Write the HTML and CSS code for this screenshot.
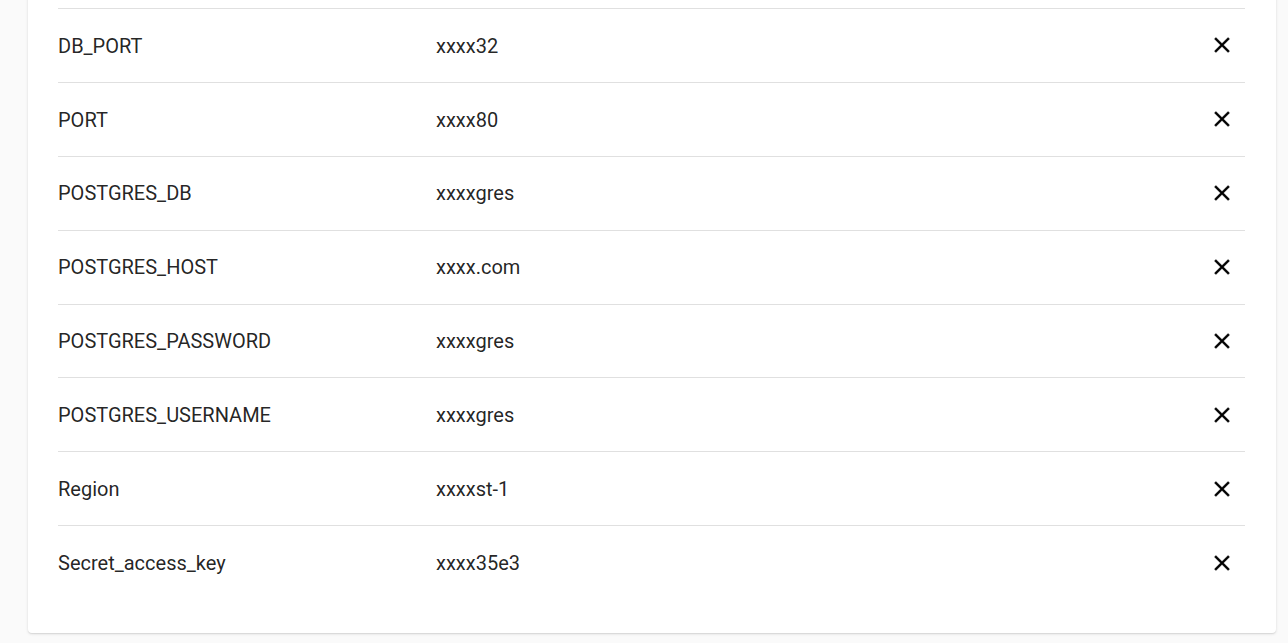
FILE: index.html
```html
<!DOCTYPE html>
<html>
<head>
<meta charset="utf-8">
<link rel="stylesheet" href="styles.css">
</head>
<body>
<div class="card">
  <div class="row"><div class="key">DB_PORT</div><div class="val">xxxx32</div><button class="del" aria-label="delete"><svg viewBox="0 0 24 24"><path d="M19 6.41L17.59 5 12 10.59 6.41 5 5 6.41 10.59 12 5 17.59 6.41 19 12 13.41 17.59 19 19 17.59 13.41 12z"/></svg></button></div>
  <div class="row"><div class="key">PORT</div><div class="val">xxxx80</div><button class="del" aria-label="delete"><svg viewBox="0 0 24 24"><path d="M19 6.41L17.59 5 12 10.59 6.41 5 5 6.41 10.59 12 5 17.59 6.41 19 12 13.41 17.59 19 19 17.59 13.41 12z"/></svg></button></div>
  <div class="row"><div class="key">POSTGRES_DB</div><div class="val">xxxxgres</div><button class="del" aria-label="delete"><svg viewBox="0 0 24 24"><path d="M19 6.41L17.59 5 12 10.59 6.41 5 5 6.41 10.59 12 5 17.59 6.41 19 12 13.41 17.59 19 19 17.59 13.41 12z"/></svg></button></div>
  <div class="row"><div class="key">POSTGRES_HOST</div><div class="val">xxxx.com</div><button class="del" aria-label="delete"><svg viewBox="0 0 24 24"><path d="M19 6.41L17.59 5 12 10.59 6.41 5 5 6.41 10.59 12 5 17.59 6.41 19 12 13.41 17.59 19 19 17.59 13.41 12z"/></svg></button></div>
  <div class="row"><div class="key">POSTGRES_PASSWORD</div><div class="val">xxxxgres</div><button class="del" aria-label="delete"><svg viewBox="0 0 24 24"><path d="M19 6.41L17.59 5 12 10.59 6.41 5 5 6.41 10.59 12 5 17.59 6.41 19 12 13.41 17.59 19 19 17.59 13.41 12z"/></svg></button></div>
  <div class="row"><div class="key">POSTGRES_USERNAME</div><div class="val">xxxxgres</div><button class="del" aria-label="delete"><svg viewBox="0 0 24 24"><path d="M19 6.41L17.59 5 12 10.59 6.41 5 5 6.41 10.59 12 5 17.59 6.41 19 12 13.41 17.59 19 19 17.59 13.41 12z"/></svg></button></div>
  <div class="row"><div class="key">Region</div><div class="val">xxxxst-1</div><button class="del" aria-label="delete"><svg viewBox="0 0 24 24"><path d="M19 6.41L17.59 5 12 10.59 6.41 5 5 6.41 10.59 12 5 17.59 6.41 19 12 13.41 17.59 19 19 17.59 13.41 12z"/></svg></button></div>
  <div class="row"><div class="key">Secret_access_key</div><div class="val">xxxx35e3</div><button class="del" aria-label="delete"><svg viewBox="0 0 24 24"><path d="M19 6.41L17.59 5 12 10.59 6.41 5 5 6.41 10.59 12 5 17.59 6.41 19 12 13.41 17.59 19 19 17.59 13.41 12z"/></svg></button></div>
</div>
</body>
</html>
```

FILE: styles.css
```css
html, body {
  margin: 0;
  padding: 0;
  background: #fafafa;
  font-family: Roboto, "Liberation Sans", sans-serif;
  overflow: hidden;
}

.card {
  margin: -16px 12px 10px 28px;
  padding: 24px 31px 34px 30px;
  background: #ffffff;
  border-radius: 4px;
  box-shadow: 0 1px 3px rgba(0, 0, 0, 0.12), 0 1px 1px rgba(0, 0, 0, 0.06);
}

.row {
  display: grid;
  grid-template-columns: 378px 1fr 47px;
  align-items: center;
  height: 73.875px;
  box-sizing: border-box;
  border-top: 1px solid #e0e0e0;
  font-size: 20px;
  color: rgba(0, 0, 0, 0.87);
}

.key, .val {
  line-height: 24px;
  padding-top: 0.5px;
}

.del {
  width: 48px;
  height: 48px;
  padding: 0;
  border: none;
  background: transparent;
  display: flex;
  align-items: center;
  justify-content: center;
  cursor: pointer;
}

.del svg {
  width: 26px;
  height: 26px;
  fill: #000000;
  stroke: #000000;
  stroke-width: 0.3;
  display: block;
}
```
